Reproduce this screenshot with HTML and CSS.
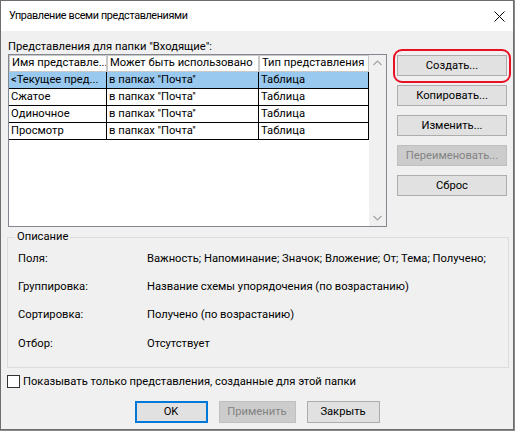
FILE: index.html
```html
<!DOCTYPE html>
<html lang="ru">
<head>
<meta charset="utf-8">
<title>Управление всеми представлениями</title>
<link rel="stylesheet" href="styles.css">
</head>
<body>
<div class="window">
  <div class="titlebar">
    <span class="title">Управление всеми представлениями</span>
    <svg class="close" width="11" height="11" viewBox="0 0 11 11"><path d="M0.5 0.5 L10.5 10.5 M10.5 0.5 L0.5 10.5" stroke="#000" stroke-width="1" fill="none"/></svg>
  </div>
  <div class="body">
    <div class="top">
      <div class="left">
        <div class="caption">Представления для папки "Входящие":</div>
        <div class="listbox">
          <div class="grid">
            <div class="header">
              <div class="hc c1">Имя представле...</div>
              <div class="hc c2">Может быть использовано</div>
              <div class="hc c3">Тип представления</div>
            </div>
            <div class="row sel">
              <div class="cell c1">&lt;Текущее пред...</div>
              <div class="cell c2">в папках ''Почта''</div>
              <div class="cell c3">Таблица</div>
            </div>
            <div class="row">
              <div class="cell c1">Сжатое</div>
              <div class="cell c2">в папках ''Почта''</div>
              <div class="cell c3">Таблица</div>
            </div>
            <div class="row">
              <div class="cell c1">Одиночное</div>
              <div class="cell c2">в папках ''Почта''</div>
              <div class="cell c3">Таблица</div>
            </div>
            <div class="row">
              <div class="cell c1">Просмотр</div>
              <div class="cell c2">в папках ''Почта''</div>
              <div class="cell c3">Таблица</div>
            </div>
          </div>
          <div class="scrollbar">
            <svg class="arrow" width="17" height="17" viewBox="0 0 17 17"><path d="M4.5 10 L8.5 6 L12.5 10" stroke="#a3a3a3" stroke-width="1.2" fill="none"/></svg>
            <svg class="arrow" width="17" height="17" viewBox="0 0 17 17"><path d="M4.5 7 L8.5 11 L12.5 7" stroke="#a3a3a3" stroke-width="1.2" fill="none"/></svg>
          </div>
        </div>
      </div>
      <div class="buttons">
        <div class="btn-wrap">
          <button class="btn">Создать...</button>
          <span class="highlight"></span>
        </div>
        <button class="btn">Копировать...</button>
        <button class="btn">Изменить...</button>
        <button class="btn" disabled>Переименовать...</button>
        <button class="btn">Сброс</button>
      </div>
    </div>
    <fieldset class="desc">
      <legend>Описание</legend>
      <div class="desc-grid">
        <div>Поля:</div><div>Важность; Напоминание; Значок; Вложение; От; Тема; Получено;</div>
        <div>Группировка:</div><div>Название схемы упорядочения (по возрастанию)</div>
        <div>Сортировка:</div><div>Получено (по возрастанию)</div>
        <div>Отбор:</div><div>Отсутствует</div>
      </div>
    </fieldset>
    <div class="check"><span class="box"></span><span>Показывать только представления, созданные для этой папки</span></div>
    <div class="footer">
      <button class="btn ok">OK</button>
      <button class="btn apply" disabled>Применить</button>
      <button class="btn closebtn">Закрыть</button>
    </div>
  </div>
</div>
</body>
</html>
```

FILE: styles.css
```css
html, body {
  margin: 0;
  padding: 0;
}
body {
  background: #8a8a8a;
  font-family: Roboto, "Noto Sans", sans-serif;
  font-size: 11.2px;
  color: #000;
}
.window {
  width: 512px;
  height: 428px;
  border: 1px solid #6d6d6d;
  background: #f0f0f0;
  display: flex;
  flex-direction: column;
}
.titlebar {
  height: 30px;
  background: #fff;
  display: flex;
  align-items: center;
  justify-content: space-between;
  padding: 0 8px;
}
.title {
  line-height: 16px;
  font-size: 10.8px;
  letter-spacing: -0.35px;
}
.close {
  display: block;
}
.body {
  flex: 1;
  padding: 8px 6px 0 6px;
}
.top {
  display: flex;
}
.left {
  margin-left: 1px;
}
.caption {
  height: 15px;
  line-height: 15px;
  white-space: nowrap;
}
.listbox {
  width: 377px;
  height: 171px;
  border: 1px solid #828790;
  background: #fff;
  display: flex;
}
.grid {
  width: 360px;
}
.header {
  display: flex;
  height: 17px;
}
.hc {
  box-sizing: border-box;
  height: 17px;
  border: 1px solid #c8c8c8;
  background: #fff;
  padding-left: 2px;
  line-height: 14px;
  white-space: nowrap;
  overflow: hidden;
}
.c1 { width: 98px; }
.c2 { width: 152px; }
.c3 { width: 110px; }
.row {
  display: flex;
  height: 17px;
}
.cell {
  box-sizing: border-box;
  height: 17px;
  border-right: 1px solid #000;
  border-bottom: 1px solid #000;
  padding-left: 2px;
  line-height: 15px;
  white-space: nowrap;
  overflow: hidden;
}
.row.sel .cell {
  background: #99c9ef;
}
.scrollbar {
  width: 17px;
  background: #f0f0f0;
  display: flex;
  flex-direction: column;
  justify-content: space-between;
}
.arrow {
  display: block;
}
.buttons {
  margin-left: 10px;
  margin-top: 16px;
  display: flex;
  flex-direction: column;
  gap: 9px;
}
.btn {
  width: 110px;
  height: 21px;
  background: #e1e1e1;
  border: 1px solid #adadad;
  font: inherit;
  color: #000;
  padding: 0;
  margin: 0;
  line-height: 18px;
}
.btn:disabled {
  background: #cccccc;
  border-color: #bfbfbf;
  color: #838383;
}
.btn-wrap {
  position: relative;
  height: 21px;
}
.btn-wrap .btn {
  display: block;
}
.highlight {
  position: absolute;
  left: -4px;
  top: -6px;
  width: 118px;
  height: 34px;
  box-sizing: border-box;
  border: 2px solid #e81123;
  border-radius: 9px;
  pointer-events: none;
}
.desc {
  margin: 2px 0 0 0;
  padding: 0 0 9px 0;
  width: 502px;
  box-sizing: border-box;
  border: 1px solid #dcdcdc;
  min-width: 0;
}
.desc legend {
  margin-left: 7px;
  padding: 0 2px;
  line-height: 16px;
}
.desc-grid {
  display: grid;
  grid-template-columns: 129px 1fr;
  grid-auto-rows: 28.4px;
  align-items: center;
  padding-left: 10px;
  margin-top: -1px;
  white-space: nowrap;
}
.check {
  display: flex;
  align-items: center;
  height: 16px;
  margin-top: 6px;
}
.box {
  width: 11px;
  height: 11px;
  border: 1px solid #333;
  background: #fff;
  margin-right: 3px;
}
.footer {
  display: flex;
  justify-content: center;
  gap: 11px;
  margin-top: 11px;
}
.footer .btn {
  height: 22px;
  width: 73px;
}
.footer .apply {
  width: 77px;
}
.footer .ok {
  border: 2px solid #0078d7;
}
```
